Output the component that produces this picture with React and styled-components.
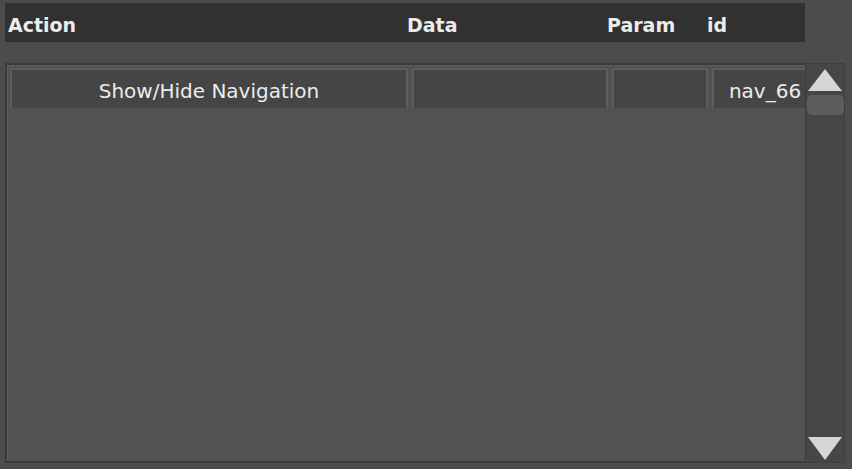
import styled, { createGlobalStyle } from 'styled-components'

const colors = {
  page: '#4c4c4c',
  header: '#313131',
  panel: '#525252',
  panelEdge: '#3a3a3a',
  cell: '#454545',
  cellEdge: '#5c5c5c',
  text: '#ececec',
  arrow: '#d6d6d6',
}

const GlobalStyle = createGlobalStyle`
  html, body {
    margin: 0;
    padding: 0;
    background: ${colors.page};
  }
  body {
    font-family: "DejaVu Sans", "Liberation Sans", sans-serif;
    overflow: hidden;
  }
`

const columns = [
  { key: 'action', label: 'Action', head: 399, width: 398, value: 'Show/Hide Navigation' },
  { key: 'data', label: 'Data', head: 200, width: 196, value: '' },
  { key: 'param', label: 'Param', head: 100, width: 96, value: '' },
  { key: 'id', label: 'id', head: 90, width: 106, value: 'nav_66' },
]

/* -------------------------------------------------------------------------- */

const Screen = styled.div`
  width: 852px;
  height: 469px;
  padding: 3px 0 0 5px;
  box-sizing: border-box;
  display: flex;
  flex-direction: column;
  gap: 21px;
`

const HeaderBar = styled.div`
  width: 800px;
  height: 39px;
  background: ${colors.header};
  display: flex;
  align-items: center;
  padding-left: 3px;
  box-sizing: border-box;
`

const HeaderLabel = styled.div`
  width: ${({ $w }) => $w}px;
  flex: none;
  font-size: 19px;
  font-weight: bold;
  color: ${colors.text};
  padding-top: 5px;
`

/* -------------------------------------------------------------------------- */

const Body = styled.div`
  display: flex;
  height: 400px;
`

const List = styled.div`
  width: 800px;
  box-sizing: border-box;
  background: ${colors.panel};
  border: 2px solid ${colors.panelEdge};
  border-right: none;
  box-shadow: inset 1px 1px 0 #5e5e5e;
  padding: 3px 0 0 3px;
  overflow: hidden;
`

const Row = styled.div`
  display: flex;
  gap: 4px;
  height: 40px;
`

const Cell = styled.div`
  width: ${({ $w }) => $w}px;
  flex: none;
  box-sizing: border-box;
  background: ${colors.cell};
  border: 2px solid ${colors.cellEdge};
  border-bottom: none;
  border-radius: 3px 3px 0 0;
  display: flex;
  align-items: center;
  justify-content: center;
  font-size: 20px;
  color: ${colors.text};
  white-space: nowrap;
  padding-top: 4px;
`

/* -------------------------------------------------------------------------- */

const Scrollbar = styled.div`
  width: 40px;
  box-sizing: border-box;
  background: #464646;
  border: 1px solid #3e3e3e;
  display: flex;
  flex-direction: column;
  align-items: center;
  padding: 4px 0 2px;
`

const Arrow = styled.svg`
  width: 36px;
  height: 24px;
  flex: none;
`

const Thumb = styled.div`
  width: 37px;
  height: 20px;
  margin-top: 3px;
  background: #5c5c5c;
  border-radius: 5px;
`

const Spacer = styled.div`
  flex: 1;
`

export default function App() {
  return (
    <>
      <GlobalStyle />
      <Screen>
        <HeaderBar>
          {columns.map((c) => (
            <HeaderLabel key={c.key} $w={c.head}>
              {c.label}
            </HeaderLabel>
          ))}
        </HeaderBar>
        <Body>
          <List>
            <Row>
              {columns.map((c) => (
                <Cell key={c.key} $w={c.width}>
                  {c.value}
                </Cell>
              ))}
            </Row>
          </List>
          <Scrollbar>
            <Arrow viewBox="0 0 36 24">
              <polygon points="18,1 35,23 1,23" fill={colors.arrow} />
            </Arrow>
            <Thumb />
            <Spacer />
            <Arrow viewBox="0 0 36 24">
              <polygon points="1,1 35,1 18,24" fill={colors.arrow} />
            </Arrow>
          </Scrollbar>
        </Body>
      </Screen>
    </>
  )
}
